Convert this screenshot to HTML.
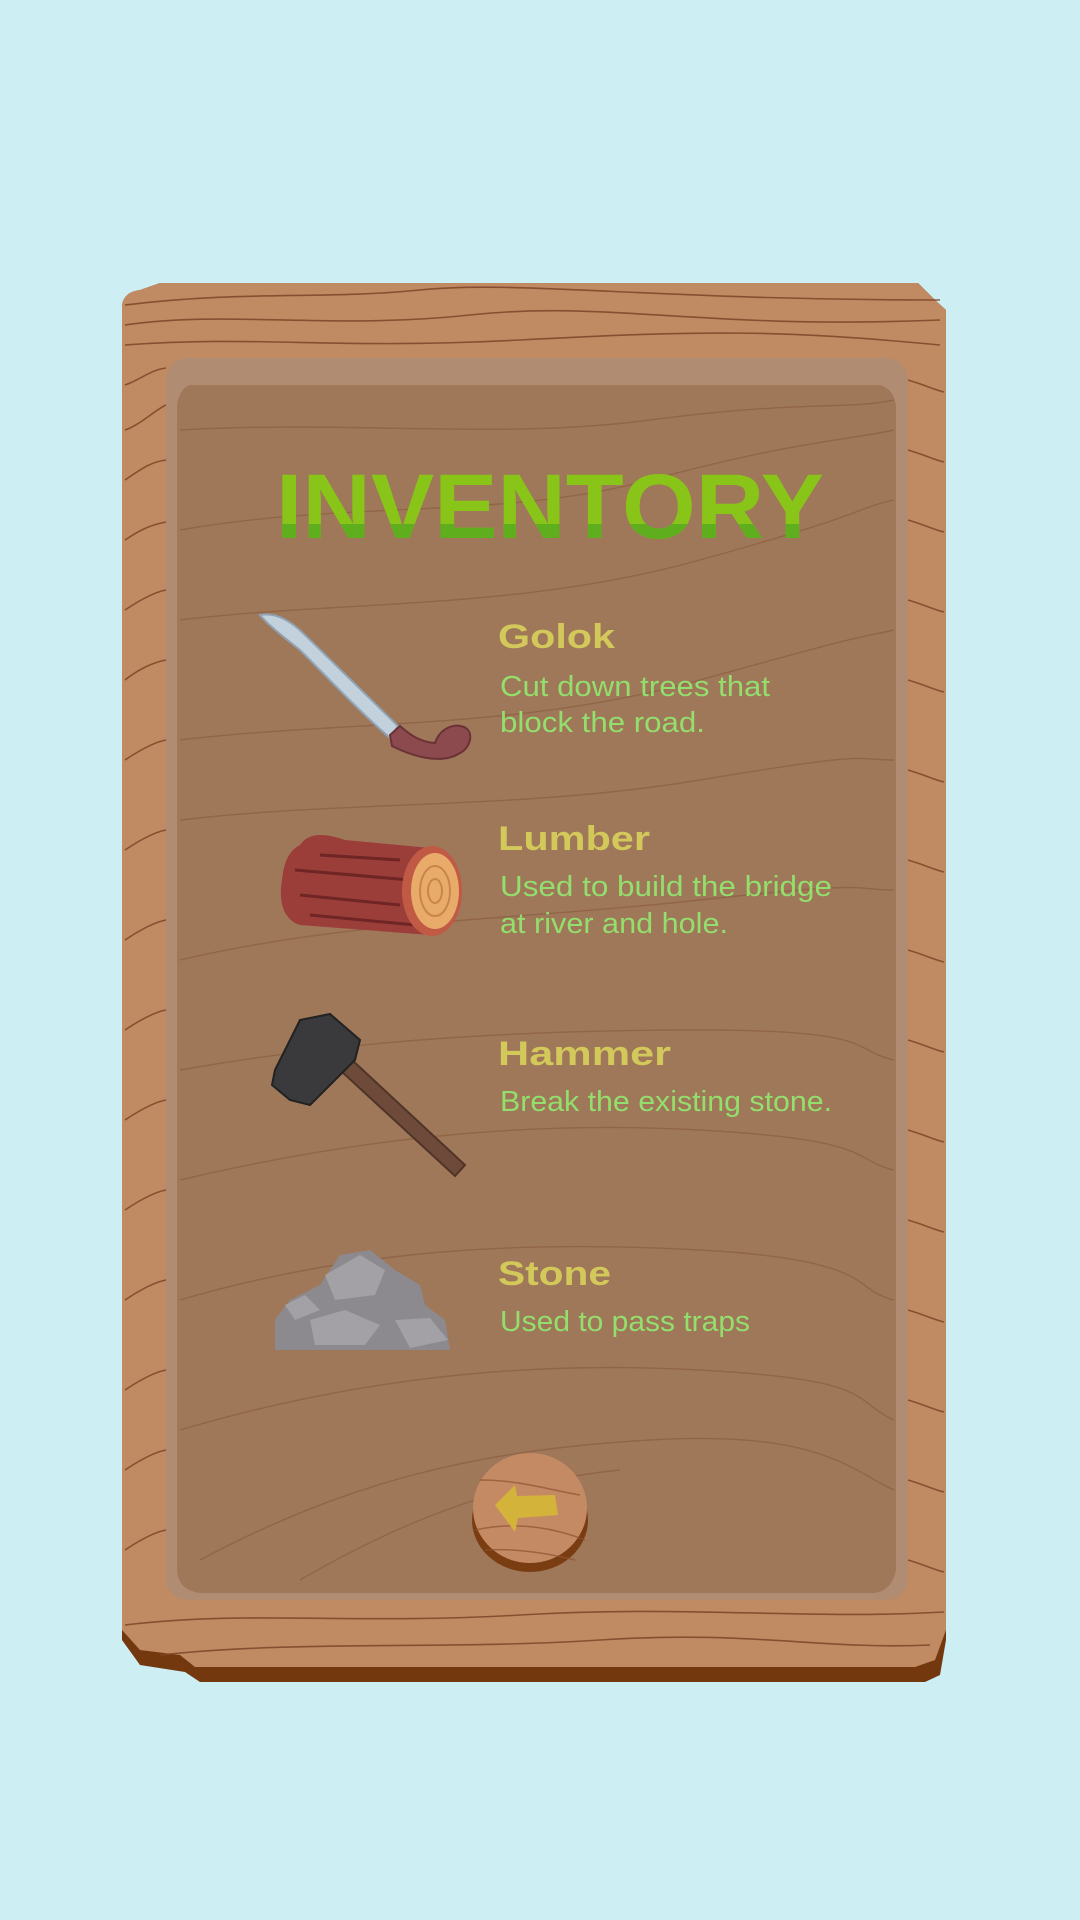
<!DOCTYPE html>
<html><head><meta charset="utf-8"><style>
html,body{margin:0;padding:0;background:#cdeef2;}
svg{display:block}
</style></head><body>
<svg width="1080" height="1920" viewBox="0 0 1080 1920" xmlns="http://www.w3.org/2000/svg">
<defs>
<clipPath id="tb"><rect x="0" y="524" width="1080" height="20"/></clipPath>
</defs>
<rect width="1080" height="1920" fill="#cdeef2"/>
<!-- board shadow -->
<path d="M122 305 Q124 292 140 290 L160 283 L918 283 L935 300 L946 310 L946 1640 L940 1675 L925 1682 L200 1682 L185 1672 L140 1665 L122 1640 Z" fill="#74380f"/>
<!-- board -->
<path d="M122 305 Q124 292 140 290 L160 283 L918 283 L935 300 L946 310 L946 1630 L935 1660 L915 1667 L195 1667 L180 1655 L140 1650 L122 1630 Z" fill="#c08a63"/>
<g fill="none" stroke="#7e4528" stroke-width="1.6" opacity="0.85">
<path d="M125 305 C250 290 320 300 420 290 S650 300 940 300"/>
<path d="M125 325 C230 310 330 330 470 315 S700 330 940 320"/>
<path d="M125 345 C260 335 330 350 520 340 S780 330 940 345"/>
<path d="M125 385 C140 380 150 370 166 368"/>
<path d="M125 430 C140 425 155 410 166 405"/>
<path d="M125 480 C140 470 150 462 166 460"/>
<path d="M125 540 C140 530 150 525 166 522"/>
<path d="M125 610 C140 600 155 592 166 590"/>
<path d="M125 680 C140 668 155 662 166 660"/>
<path d="M125 760 C140 750 155 742 166 740"/>
<path d="M125 850 C140 840 155 832 166 830"/>
<path d="M125 940 C140 930 155 922 166 920"/>
<path d="M125 1030 C140 1020 155 1012 166 1010"/>
<path d="M125 1120 C140 1110 155 1102 166 1100"/>
<path d="M125 1210 C140 1200 155 1192 166 1190"/>
<path d="M125 1300 C140 1290 155 1282 166 1280"/>
<path d="M125 1390 C140 1380 155 1372 166 1370"/>
<path d="M125 1470 C140 1460 155 1452 166 1450"/>
<path d="M125 1550 C140 1540 155 1532 166 1530"/>
<path d="M908 380 C925 385 935 390 944 392"/>
<path d="M908 450 C925 455 935 460 944 462"/>
<path d="M908 520 C925 525 935 530 944 532"/>
<path d="M908 600 C925 605 935 610 944 612"/>
<path d="M908 680 C925 685 935 690 944 692"/>
<path d="M908 770 C925 775 935 780 944 782"/>
<path d="M908 860 C925 865 935 870 944 872"/>
<path d="M908 950 C925 955 935 960 944 962"/>
<path d="M908 1040 C925 1045 935 1050 944 1052"/>
<path d="M908 1130 C925 1135 935 1140 944 1142"/>
<path d="M908 1220 C925 1225 935 1230 944 1232"/>
<path d="M908 1310 C925 1315 935 1320 944 1322"/>
<path d="M908 1400 C925 1405 935 1410 944 1412"/>
<path d="M908 1480 C925 1485 935 1490 944 1492"/>
<path d="M908 1560 C925 1565 935 1570 944 1572"/>
<path d="M125 1625 C250 1610 350 1625 520 1615 S800 1620 944 1612"/>
<path d="M160 1655 C300 1640 450 1650 600 1640 S820 1650 930 1645"/>
</g>
<!-- inner panel -->
<rect x="166" y="358" width="742" height="1242" rx="22" fill="#b08c73"/>
<path d="M190 385 L880 385 Q896 390 896 410 L896 1570 Q892 1590 875 1593 L200 1593 Q178 1590 177 1570 L177 405 Q180 388 190 385 Z" fill="#9f7759"/>
<g fill="none" stroke="#87583a" stroke-width="1.4" opacity="0.55">
<path d="M180 430 C350 420 500 440 650 420 S850 410 894 400"/>
<path d="M180 530 C350 500 500 520 650 480 S850 440 894 430"/>
<path d="M180 620 C350 600 520 610 700 560 S850 510 894 500"/>
<path d="M180 740 C350 720 520 730 700 680 S850 640 894 630"/>
<path d="M180 820 C350 800 520 810 700 780 S850 760 894 760"/>
<path d="M180 960 C350 920 520 920 700 900 S850 890 894 890"/>
<path d="M180 1070 C350 1040 520 1030 700 1030 S850 1050 894 1060"/>
<path d="M180 1180 C350 1140 520 1120 700 1130 S850 1160 894 1170"/>
<path d="M180 1300 C350 1250 520 1240 700 1250 S850 1290 894 1300"/>
<path d="M180 1430 C350 1380 520 1360 700 1370 S850 1400 894 1420"/>
<path d="M200 1560 C350 1480 480 1450 650 1440 S850 1470 894 1490"/>
<path d="M300 1580 C420 1510 520 1480 620 1470"/>
</g>
<!-- title -->
<text x="550" y="538" text-anchor="middle" font-family="Liberation Sans, sans-serif" font-weight="bold" font-size="92" fill="#88c518" textLength="548" lengthAdjust="spacingAndGlyphs">INVENTORY</text>
<text x="550" y="538" text-anchor="middle" font-family="Liberation Sans, sans-serif" font-weight="bold" font-size="92" fill="#5fae1d" textLength="548" lengthAdjust="spacingAndGlyphs" clip-path="url(#tb)">INVENTORY</text>
<!-- texts -->
<g font-family="Liberation Sans, sans-serif">
<g font-weight="bold" font-size="34" fill="#d3c85a">
<text x="498" y="648" textLength="117" lengthAdjust="spacingAndGlyphs">Golok</text>
<text x="498" y="850" textLength="152" lengthAdjust="spacingAndGlyphs">Lumber</text>
<text x="498" y="1065" textLength="173" lengthAdjust="spacingAndGlyphs">Hammer</text>
<text x="498" y="1285" textLength="113" lengthAdjust="spacingAndGlyphs">Stone</text>
</g>
<g font-size="29" fill="#93de6c">
<text x="500" y="696" textLength="270" lengthAdjust="spacingAndGlyphs">Cut down trees that</text>
<text x="500" y="732" textLength="205" lengthAdjust="spacingAndGlyphs">block the road.</text>
<text x="500" y="896" textLength="332" lengthAdjust="spacingAndGlyphs">Used to build the bridge</text>
<text x="500" y="933" textLength="228" lengthAdjust="spacingAndGlyphs">at river and hole.</text>
<text x="500" y="1111" textLength="332" lengthAdjust="spacingAndGlyphs">Break the existing stone.</text>
<text x="500" y="1331" textLength="250" lengthAdjust="spacingAndGlyphs">Used to pass traps</text>
</g>
</g>
<!-- golok -->
<path d="M260 615 C275 612 290 620 305 635 L398 726 L390 738 C360 712 330 680 300 650 C285 638 268 625 260 615 Z" fill="#c3d1dc" stroke="#8fa3b5" stroke-width="2"/>
<path d="M390 735 L400 726 C410 735 420 742 435 743 C440 728 455 722 466 728 C474 734 470 748 460 753 C445 763 420 760 392 746 Z" fill="#8c4a4e" stroke="#6b3236" stroke-width="2"/>
<!-- log -->
<path d="M300 845 C310 830 330 835 345 840 L430 848 L430 935 L300 925 C285 920 278 905 282 880 C284 860 290 850 300 845 Z" fill="#9b3e3a"/>
<g stroke="#6e2523" stroke-width="3" fill="none"><path d="M295 870 L410 880"/><path d="M300 895 L400 905"/><path d="M310 915 L415 925"/><path d="M320 855 L400 860"/></g>
<ellipse cx="432" cy="891" rx="30" ry="45" fill="#c15a45"/>
<ellipse cx="435" cy="891" rx="24" ry="38" fill="#e9ab6a"/>
<ellipse cx="435" cy="891" rx="15" ry="25" fill="none" stroke="#c9864b" stroke-width="2"/>
<ellipse cx="435" cy="891" rx="7" ry="12" fill="none" stroke="#c9864b" stroke-width="2"/>
<!-- hammer -->
<path d="M340 1070 L352 1060 L465 1165 L455 1176 Z" fill="#6e4a3a" stroke="#4f3428" stroke-width="2"/>
<path d="M300 1020 L330 1014 L360 1040 L355 1060 L310 1105 L290 1100 L272 1085 L275 1070 Z" fill="#3a3a3c" stroke="#222" stroke-width="2"/>
<!-- stone -->
<path d="M275 1350 L275 1320 L290 1300 L320 1285 L340 1255 L370 1250 L395 1270 L420 1285 L425 1305 L445 1320 L450 1350 Z" fill="#8c8a8e"/>
<g fill="#a3a1a5"><path d="M325 1275 L360 1255 L385 1270 L375 1295 L335 1300 Z"/><path d="M310 1320 L345 1310 L380 1325 L365 1345 L315 1345 Z"/><path d="M395 1320 L430 1318 L448 1340 L410 1348 Z"/><path d="M285 1305 L305 1295 L320 1310 L295 1320 Z"/></g>
<!-- back button -->
<ellipse cx="530" cy="1520" rx="58" ry="52" fill="#7a3d12"/>
<ellipse cx="530" cy="1508" rx="57" ry="55" fill="#c48a63"/>
<g stroke="#8d5232" stroke-width="1.5" fill="none" opacity="0.7"><path d="M480 1480 C520 1480 550 1490 580 1495"/><path d="M475 1530 C520 1520 560 1530 585 1540"/><path d="M485 1550 C520 1548 555 1555 575 1560"/></g>
<path d="M495 1505 L515 1485 L517 1496 L555 1495 L558 1515 L518 1518 L515 1532 Z" fill="#d4b33a"/>
</svg>
</body></html>
